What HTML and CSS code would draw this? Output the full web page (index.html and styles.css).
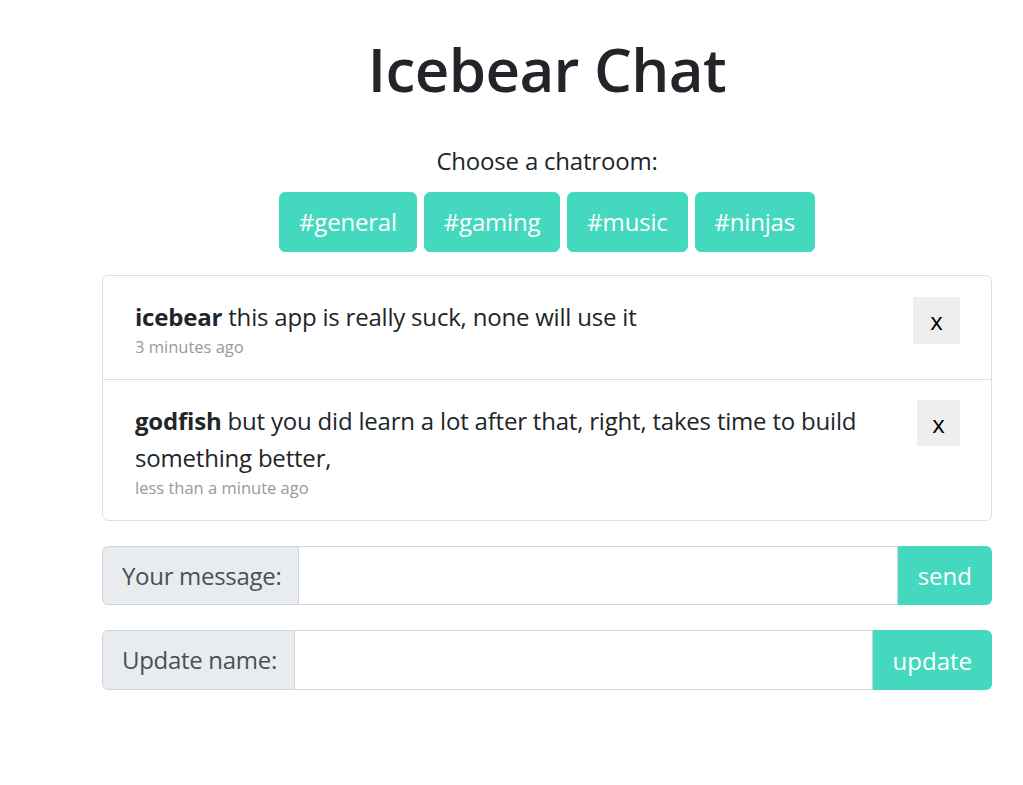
FILE: index.html
```html
<!DOCTYPE html>
<html>
<head>
<meta charset="utf-8">
<link rel="stylesheet" href="styles.css">
</head>
<body>
<div class="page">
  <h1 class="title">Icebear Chat</h1>
  <p class="choose">Choose a chatroom:</p>
  <div class="rooms">
    <button class="room">#general</button>
    <button class="room">#gaming</button>
    <button class="room">#music</button>
    <button class="room">#ninjas</button>
  </div>
  <ul class="messages">
    <li class="msg">
      <div class="msg-body">
        <p class="msg-text"><b>icebear</b> this app is really suck, none will use it</p>
        <div class="msg-time">3 minutes ago</div>
      </div>
      <button class="del del-1">x</button>
    </li>
    <li class="msg">
      <div class="msg-body">
        <p class="msg-text"><b>godfish</b> but you did learn a lot after that, right, takes time to build something better,</p>
        <div class="msg-time">less than a minute ago</div>
      </div>
      <button class="del del-2">x</button>
    </li>
  </ul>
  <form class="group group-msg">
    <span class="group-label">Your message:</span>
    <input class="group-input" type="text">
    <button class="group-btn" type="button">send</button>
  </form>
  <form class="group group-name">
    <span class="group-label">Update name:</span>
    <input class="group-input" type="text">
    <button class="group-btn" type="button">update</button>
  </form>
</div>
</body>
</html>
```
FILE: styles.css
```css
* { box-sizing: border-box; }
html, body { margin: 0; padding: 0; background: #fff; }
body {
  font-family: "Open Sans", "Noto Sans", sans-serif;
  color: #212529;
  font-size: 24px;
  line-height: 1.5;
}
.page {
  width: 890px;
  margin-left: 102px;
  padding-top: 33px;
}
.title {
  margin: 0;
  text-align: center;
  font-size: 60px;
  font-weight: 600;
  line-height: 72px;
  letter-spacing: -0.6px;
}
.choose {
  margin: 38px 0 0;
  text-align: center;
  font-size: 24px;
  line-height: 36px;
  letter-spacing: -0.2px;
}
.rooms {
  display: flex;
  justify-content: center;
  gap: 7px;
  margin-top: 13px;
}
.room {
  font-family: inherit;
  font-size: 24px;
  line-height: 36px;
  color: #fff;
  background: #44d9bf;
  border: 1px solid #44d9bf;
  border-radius: 6px;
  padding: 11px 19px;
  letter-spacing: -0.2px;
}
.messages {
  list-style: none;
  margin: 23px 0 0;
  padding: 0;
  border: 1px solid #dfdfdf;
  border-radius: 6px;
}
.msg {
  display: flex;
  align-items: flex-start;
  padding: 22px 31px 20px 32px;
}
.msg + .msg { border-top: 1px solid #dfdfdf; }
.msg-body { flex: 1; }
.msg-text { margin: 0; font-size: 24px; line-height: 37px; letter-spacing: -0.2px; }
.msg-text b { font-weight: 700; }
.msg-time { font-size: 16.5px; line-height: 24px; color: #999; }
.del {
  font-family: inherit;
  font-size: 24px;
  color: #000;
  background: #eee;
  border: none;
  padding: 0;
  height: 47px;
  width: 47px;
  margin-left: 40px;
  margin-top: -1px;
}
.del-2 { width: 43px; height: 46px; margin-top: -2px; }
.group {
  display: flex;
  height: 59px;
  margin: 25px 0 0;
}
.group-name { height: 60px; }
.group-label {
  display: flex;
  align-items: center;
  padding: 0 17px 0 19px;
  background: #e9ecef;
  border: 1px solid #ced4da;
  border-radius: 6px 0 0 6px;
  color: #495057;
  font-size: 24px;
  letter-spacing: -0.3px;
}
.group-input {
  flex: 1;
  min-width: 0;
  border: 1px solid #ced4da;
  border-left: none;
  font-size: 24px;
  font-family: inherit;
}
.group-btn {
  font-family: inherit;
  font-size: 24px;
  color: #fff;
  background: #44d9bf;
  border: none;
  border-radius: 0 6px 6px 0;
  padding: 0 20px;
}
```
